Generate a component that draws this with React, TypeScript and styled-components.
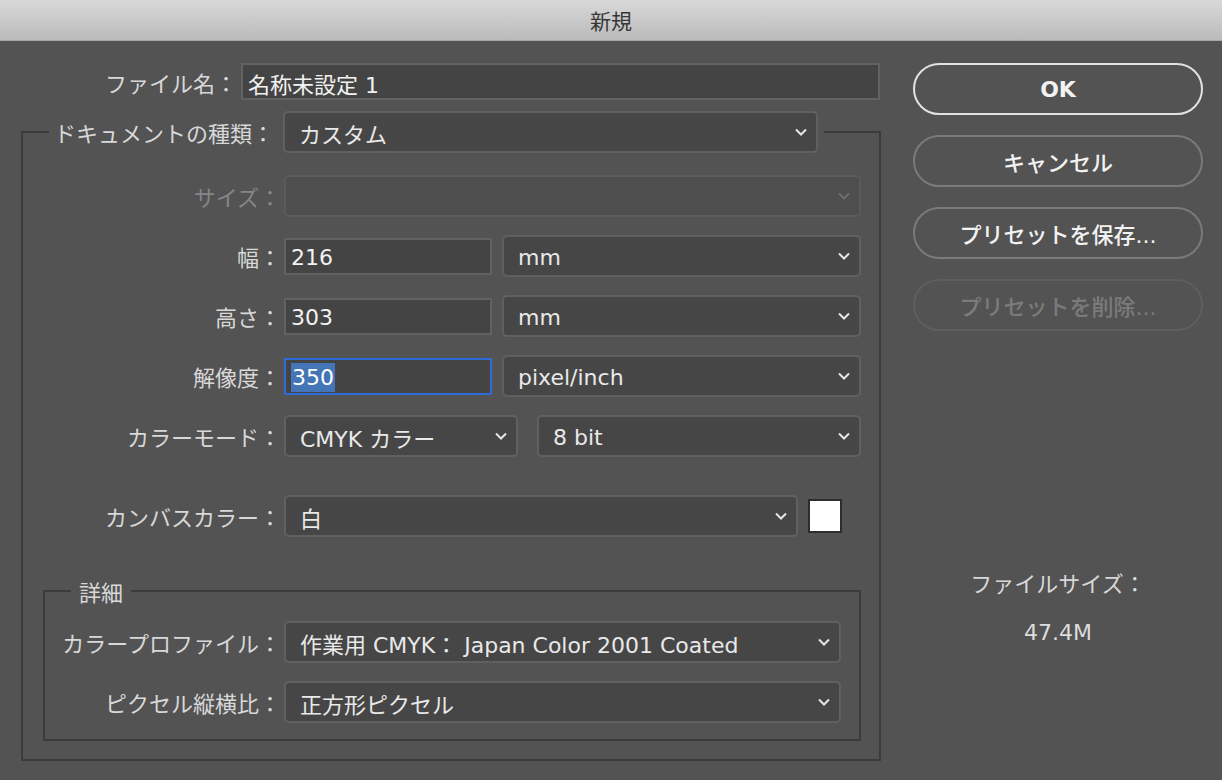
import React from 'react'
import styled, { createGlobalStyle } from 'styled-components'

const GlobalStyle = createGlobalStyle`
  html, body {
    margin: 0;
    padding: 0;
    background: #535353;
  }
  body {
    width: 1222px;
    height: 780px;
    overflow: hidden;
    font-family: "DejaVu Sans", "Noto Sans CJK JP", sans-serif;
  }
`

const Window = styled.div`
  width: 1222px;
  height: 780px;
  background: #535353;
  display: flex;
  flex-direction: column;
`

const TitleBar = styled.div`
  height: 40px;
  border-bottom: 1px solid #a6a6a6;
  background: linear-gradient(#d8d8d8, #bbbbbb);
  display: flex;
  align-items: center;
  justify-content: center;
  font-family: "Noto Sans CJK JP", sans-serif;
  font-size: 21px;
  color: #363636;
`

const Body = styled.div`
  display: flex;
  padding-top: 22px;
`

const Form = styled.div`
  width: 881px;
`

const Side = styled.div`
  margin-left: 32px;
  width: 290px;
  display: flex;
  flex-direction: column;
  gap: 20px;
`

const Label = styled.div<{ $w: number; $dim?: boolean }>`
  width: ${(p) => p.$w}px;
  flex: none;
  text-align: right;
  font-family: "Noto Sans CJK JP", sans-serif;
  font-size: 22px;
  line-height: 26px;
  color: ${(p) => (p.$dim ? '#868686' : '#d8d8d8')};
  white-space: nowrap;
`

const FileRow = styled.div`
  display: flex;
  align-items: center;
  gap: 4px;
`

const TextField = styled.div<{ $w: number; $focus?: boolean }>`
  width: ${(p) => p.$w}px;
  height: 37px;
  box-sizing: border-box;
  flex: none;
  background: #444444;
  border: 2px solid ${(p) => (p.$focus ? '#2f6bd6' : '#626262')};
  display: flex;
  align-items: center;
  padding: 2px 0 0 5px;
  font-size: 22px;
  color: #f2f2f2;
  white-space: nowrap;
`

const Selected = styled.span`
  background: #4475b6;
  color: #ffffff;
  padding: 0 1px;
  line-height: 29px;
`

const Group = styled.fieldset`
  margin: 11px 0 0 21px;
  width: 860px;
  box-sizing: border-box;
  border: 2px solid #3b3b3b;
  padding: 0 0 18px 0;
  min-width: 0;
`

const GroupLegend = styled.legend`
  margin-left: 26px;
  padding: 0 6px 0 0;
`

const LegendInner = styled.div`
  display: flex;
  align-items: center;
  gap: 9px;
`

const Stack = styled.div<{ $pt: number }>`
  display: flex;
  flex-direction: column;
  gap: 18px;
  padding-top: ${(p) => p.$pt}px;
`

const Row = styled.div<{ $mt?: number }>`
  display: flex;
  align-items: center;
  height: 42px;
  margin-top: ${(p) => p.$mt || 0}px;
`

const Controls = styled.div<{ $gap: number }>`
  display: flex;
  align-items: center;
  gap: ${(p) => p.$gap}px;
  margin-left: 3px;
`

const SelectBox = styled.div<{ $w: number; $disabled?: boolean }>`
  width: ${(p) => p.$w}px;
  height: 42px;
  box-sizing: border-box;
  flex: none;
  border-radius: 5px;
  border: 2px solid ${(p) => (p.$disabled ? '#5b5b5b' : '#606060')};
  background: ${(p) => (p.$disabled ? '#4e4e4e' : '#464646')};
  display: flex;
  align-items: center;
  justify-content: space-between;
  padding: 0 9px 0 14px;
  font-size: 22px;
  color: #e9e9e9;
  white-space: nowrap;
`

const SelectText = styled.span`
  padding-top: 2px;
`

const Swatch = styled.div`
  width: 34px;
  height: 34px;
  box-sizing: border-box;
  border: 2px solid #2d2d2d;
  background: #ffffff;
  flex: none;
`

const Details = styled.fieldset`
  margin: 42px 0 0 20px;
  width: 818px;
  box-sizing: border-box;
  border: 2px solid #3b3b3b;
  padding: 0 0 16px 0;
  min-width: 0;
`

const DetailsLegend = styled.legend`
  margin-left: 26px;
  padding: 0 8px;
  font-family: "Noto Sans CJK JP", sans-serif;
  font-size: 22px;
  line-height: 24px;
  color: #d8d8d8;
`

const PillButton = styled.div<{ $kind: 'primary' | 'normal' | 'disabled' }>`
  height: 52px;
  box-sizing: border-box;
  border-radius: 26px;
  border: 2px solid
    ${(p) => (p.$kind === 'primary' ? '#e2e2e2' : p.$kind === 'normal' ? '#7a7a7a' : '#5e5e5e')};
  display: flex;
  align-items: center;
  justify-content: center;
  font-size: 22px;
  font-weight: ${(p) => (p.$kind === 'primary' ? 700 : 500)};
  color: ${(p) => (p.$kind === 'disabled' ? '#7b7b7b' : '#f2f2f2')};
`

const SizeLabel = styled.div`
  margin-top: 218px;
  text-align: center;
  font-family: "Noto Sans CJK JP", sans-serif;
  font-size: 22px;
  line-height: 26px;
  color: #d8d8d8;
`

const SizeValue = styled.div`
  margin-top: 25px;
  text-align: center;
  font-size: 22px;
  line-height: 26px;
  color: #dcdcdc;
`

const Chevron = ({ dim }: { dim?: boolean }) => (
  <svg width="12" height="8" viewBox="0 0 12 8" style={{ flex: 'none' }}>
    <polyline
      points="1,1.5 6,6.5 11,1.5"
      fill="none"
      stroke={dim ? '#6e6e6e' : '#e6e6e6'}
      strokeWidth="2"
    />
  </svg>
)

const Select = ({ w, value, disabled }: { w: number; value?: string; disabled?: boolean }) => (
  <SelectBox $w={w} $disabled={disabled}>
    <SelectText>{value}</SelectText>
    <Chevron dim={disabled} />
  </SelectBox>
)

export default function App() {
  return (
    <Window>
      <GlobalStyle />
      <TitleBar>新規</TitleBar>
      <Body>
        <Form>
          <FileRow>
            <Label $w={237}>ファイル名：</Label>
            <TextField $w={639}>名称未設定 1</TextField>
          </FileRow>

          <Group>
            <GroupLegend>
              <LegendInner>
                <Label $w={225}>ドキュメントの種類：</Label>
                <Select w={535} value="カスタム" />
              </LegendInner>
            </GroupLegend>

            <Stack $pt={22}>
              <Row>
                <Label $w={258} $dim>サイズ：</Label>
                <Controls $gap={0}>
                  <Select w={577} disabled />
                </Controls>
              </Row>
              <Row>
                <Label $w={258}>幅：</Label>
                <Controls $gap={10}>
                  <TextField $w={208}>216</TextField>
                  <Select w={359} value="mm" />
                </Controls>
              </Row>
              <Row>
                <Label $w={258}>高さ：</Label>
                <Controls $gap={10}>
                  <TextField $w={208}>303</TextField>
                  <Select w={359} value="mm" />
                </Controls>
              </Row>
              <Row>
                <Label $w={258}>解像度：</Label>
                <Controls $gap={10}>
                  <TextField $w={208} $focus>
                    <Selected>350</Selected>
                  </TextField>
                  <Select w={359} value="pixel/inch" />
                </Controls>
              </Row>
              <Row>
                <Label $w={258}>カラーモード：</Label>
                <Controls $gap={19}>
                  <Select w={234} value="CMYK カラー" />
                  <Select w={324} value="8 bit" />
                </Controls>
              </Row>
              <Row $mt={20}>
                <Label $w={258}>カンバスカラー：</Label>
                <Controls $gap={10}>
                  <Select w={514} value="白" />
                  <Swatch />
                </Controls>
              </Row>
            </Stack>

            <Details>
              <DetailsLegend>詳細</DetailsLegend>
              <Stack $pt={18}>
                <Row>
                  <Label $w={236}>カラープロファイル：</Label>
                  <Controls $gap={0}>
                    <Select w={557} value="作業用 CMYK： Japan Color 2001 Coated" />
                  </Controls>
                </Row>
                <Row>
                  <Label $w={236}>ピクセル縦横比：</Label>
                  <Controls $gap={0}>
                    <Select w={557} value="正方形ピクセル" />
                  </Controls>
                </Row>
              </Stack>
            </Details>
          </Group>
        </Form>

        <Side>
          <PillButton $kind="primary">OK</PillButton>
          <PillButton $kind="normal">キャンセル</PillButton>
          <PillButton $kind="normal">プリセットを保存...</PillButton>
          <PillButton $kind="disabled">プリセットを削除...</PillButton>
          <div>
            <SizeLabel>ファイルサイズ：</SizeLabel>
            <SizeValue>47.4M</SizeValue>
          </div>
        </Side>
      </Body>
    </Window>
  )
}
